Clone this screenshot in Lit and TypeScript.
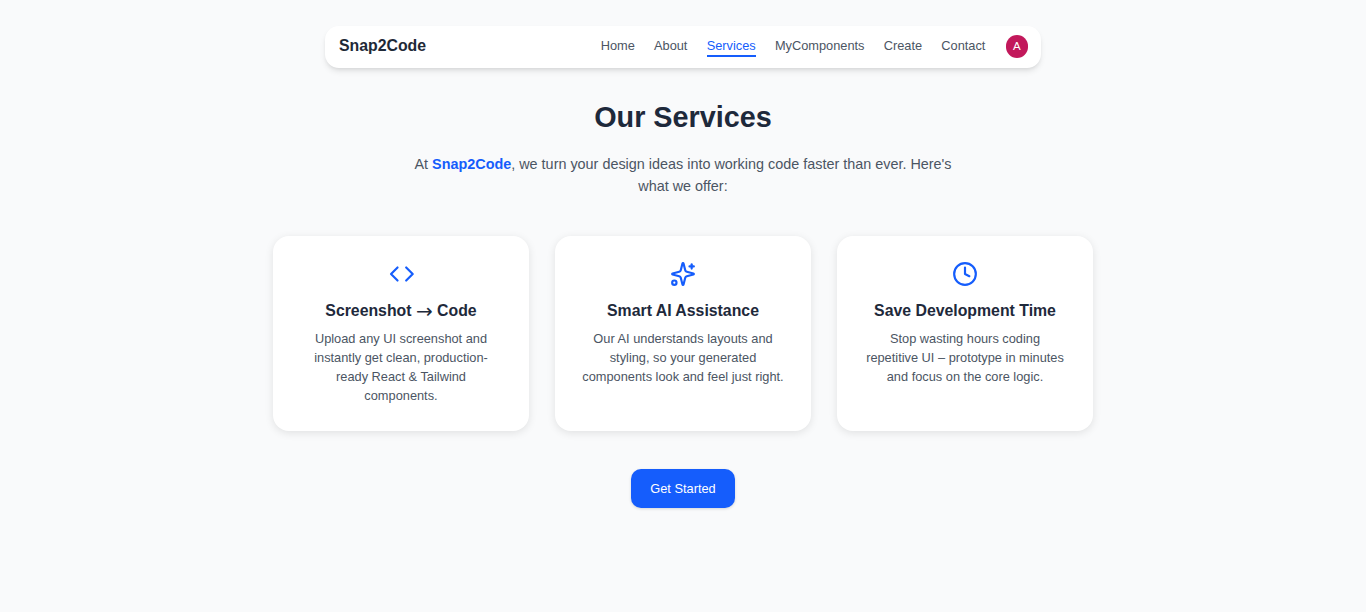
import { LitElement, html, css, svg } from "lit";
import { customElement } from "lit/decorators.js";

const icons = {
  code: svg`<g transform="translate(.8 0)"><polyline points="16 18 22 12 16 6"/><polyline points="8 6 2 12 8 18"/></g>`,
  spark: svg`<path d="M9.937 15.5A2 2 0 0 0 8.5 14.063l-6.135-1.582a.5.5 0 0 1 0-.962L8.5 9.936A2 2 0 0 0 9.937 8.5l1.582-6.135a.5.5 0 0 1 .963 0L14.063 8.5A2 2 0 0 0 15.5 9.937l6.135 1.581a.5.5 0 0 1 0 .964L15.5 14.063a2 2 0 0 0-1.437 1.437l-1.582 6.135a.5.5 0 0 1-.963 0z"/><path d="M20 3v4"/><path d="M22 5h-4"/><circle cx="4" cy="20" r="2"/>`,
  clock: svg`<circle cx="12" cy="12" r="10"/><polyline points="12 6 12 12 16 14"/>`,
};

const cards = [
  { icon: icons.code, title: html`Screenshot <span class="arrow">→</span> Code`, text: "Upload any UI screenshot and instantly get clean, production-ready React & Tailwind components." },
  { icon: icons.spark, title: "Smart AI Assistance", text: "Our AI understands layouts and styling, so your generated components look and feel just right." },
  { icon: icons.clock, title: "Save Development Time", text: "Stop wasting hours coding repetitive UI – prototype in minutes and focus on the core logic." },
];

const links = ["Home", "About", "Services", "MyComponents", "Create", "Contact"];

@customElement("app-root")
export class AppRoot extends LitElement {
  static styles = css`
    :host {
      display: block;
      min-height: 612px;
      background: #f9fafb;
      font-family: "Liberation Sans", Arial, sans-serif;
      color: #1f2937;
    }
    .page {
      display: flex;
      flex-direction: column;
      align-items: center;
      padding-top: 26px;
    }
    .nav {
      width: 716px;
      height: 42px;
      box-sizing: border-box;
      padding: 0 13px 0 14px;
      display: flex;
      align-items: center;
      justify-content: space-between;
      background: #fff;
      border-radius: 14px;
      box-shadow: 0 4px 6px -1px rgba(0,0,0,.1), 0 2px 4px -2px rgba(0,0,0,.1);
    }
    .logo { font-size: 15.84px; font-weight: 700; color: #1f2937; margin-top: -2px; }
    .links { display: flex; align-items: center; gap: 19.2px; }
    .link {
      font-size: 12.8px;
      line-height: 18px;
      color: #4b5563;
      border-bottom: 2px solid transparent;
    }
    .link.active { color: #155dfc; border-bottom-color: #155dfc; }
    .avatar {
      width: 22.4px;
      height: 22.4px;
      margin-left: 1px;
      margin-top: -1px;
      border-radius: 50%;
      background: #c2185b;
      color: #fff;
      font-size: 11.5px;
      display: flex;
      align-items: center;
      justify-content: center;
    }
    h1 {
      margin: 31px 0 0;
      font-size: 28.8px;
      line-height: 36px;
      font-weight: 700;
      color: #1e293b;
    }
    .intro {
      margin: 18px 0 0;
      width: 560px;
      text-align: center;
      font-size: 14.4px;
      line-height: 22px;
      color: #4b5563;
    }
    .intro b { color: #155dfc; font-weight: 700; }
    .cards {
      margin-top: 39px;
      display: grid;
      grid-template-columns: repeat(3, 256px);
      gap: 26px;
    }
    .card {
      height: 195px;
      box-sizing: border-box;
      padding: 25px 26px 0;
      background: #fff;
      border-radius: 16px;
      box-shadow: 0 2px 8px rgba(0,0,0,.1);
      text-align: center;
    }
    .icon { display: block; margin: 0 auto; width: 26px; height: 26px; fill: none; stroke: #155dfc; stroke-width: 2; stroke-linecap: round; stroke-linejoin: round; }
    h3 {
      margin: 12px 0 0;
      height: 24px;
      font-size: 15.84px;
      line-height: 24px;
      font-weight: 700;
      color: #1e293b;
    }
    .arrow { font-family: "DejaVu Sans", sans-serif; font-weight: 400; font-size: 20px; line-height: 0; vertical-align: -1.5px; }
    .card p {
      margin: 6px 0 0;
      font-size: 12.8px;
      line-height: 19px;
      color: #4b5563;
    }
    .cta {
      margin-top: 38px;
      width: 104px;
      height: 39px;
      border: 0;
      border-radius: 10px;
      background: #155dfc;
      color: #fff;
      font: 12.8px "Liberation Sans", Arial, sans-serif;
      box-shadow: 0 1px 3px rgba(0,0,0,.15);
      padding: 0;
    }
  `;

  render() {
    return html`
      <div class="page">
        <nav class="nav">
          <span class="logo">Snap2Code</span>
          <div class="links">
            ${links.map((l) => html`<span class="link ${l === "Services" ? "active" : ""}">${l}</span>`)}
            <span class="avatar">A</span>
          </div>
        </nav>
        <h1>Our Services</h1>
        <p class="intro">At <b>Snap2Code</b>, we turn your design ideas into working code faster than ever. Here's what we offer:</p>
        <div class="cards">
          ${cards.map((c) => html`
            <div class="card">
              <svg class="icon" viewBox="0 0 24 24">${c.icon}</svg>
              <h3>${c.title}</h3>
              <p>${c.text}</p>
            </div>`)}
        </div>
        <button class="cta">Get Started</button>
      </div>
    `;
  }
}
